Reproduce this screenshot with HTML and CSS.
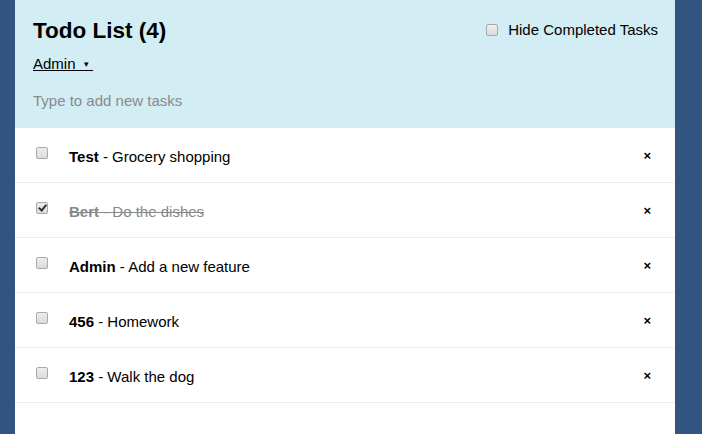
FILE: index.html
```html
<!DOCTYPE html>
<html>
<head>
<meta charset="utf-8">
<link rel="stylesheet" href="styles.css">
</head>
<body>
<div class="container">
  <header class="header">
    <div class="header-top">
      <h1 class="title">Todo List (4)</h1>
      <label class="hide-completed">
        <input type="checkbox" class="check">
        <span>Hide Completed Tasks</span>
      </label>
    </div>
    <div class="login"><a class="login-link">Admin&nbsp; <span class="caret">▾</span>&nbsp;</a></div>
    <form class="new-task">
      <input type="text" class="new-input" placeholder="Type to add new tasks">
    </form>
  </header>
  <ul class="tasks">
    <li class="task">
      <input type="checkbox" class="check">
      <span class="text"><strong>Test</strong> - Grocery shopping</span>
      <button class="delete">×</button>
    </li>
    <li class="task checked">
      <input type="checkbox" class="check" checked>
      <span class="text"><strong>Bert</strong> - Do the dishes</span>
      <button class="delete">×</button>
    </li>
    <li class="task">
      <input type="checkbox" class="check">
      <span class="text"><strong>Admin</strong> - Add a new feature</span>
      <button class="delete">×</button>
    </li>
    <li class="task">
      <input type="checkbox" class="check">
      <span class="text"><strong>456</strong> - Homework</span>
      <button class="delete">×</button>
    </li>
    <li class="task">
      <input type="checkbox" class="check">
      <span class="text"><strong>123</strong> - Walk the dog</span>
      <button class="delete">×</button>
    </li>
  </ul>
</div>
</body>
</html>
```
FILE: styles.css
```css
html, body {
  margin: 0;
  padding: 0;
  height: 100%;
}
body {
  background: #315481;
  font-family: "Liberation Sans", Arial, sans-serif;
  font-size: 15px;
  color: #000;
}
.container {
  width: 660px;
  margin-left: 15px;
  min-height: 100%;
  background: #fff;
}
.header {
  background: #d2edf4;
  padding: 18px 17px 19px 18px;
}
.header-top {
  display: flex;
  justify-content: space-between;
  align-items: flex-start;
}
.title {
  margin: 0;
  font-size: 22.5px;
  font-weight: bold;
  line-height: normal;
}
.hide-completed {
  display: flex;
  align-items: center;
  gap: 10px;
  margin-top: 3px;
  line-height: 17px;
}
.login {
  margin-top: 11px;
  line-height: 17px;
}
.login-link {
  color: #000;
  text-decoration: underline;
}
.caret {
  font-size: 9px;
  vertical-align: 2px;
}
.new-task {
  margin: 19px 0 0 0;
}
.new-input {
  display: block;
  box-sizing: border-box;
  width: 100%;
  border: none;
  background: transparent;
  padding: 0;
  height: 17px;
  font-family: "Liberation Sans", Arial, sans-serif;
  font-size: 15px;
  outline: none;
}
.new-input::placeholder {
  color: #8a8a8a;
}
.tasks {
  margin: 0;
  padding: 0;
  list-style: none;
}
.task {
  display: flex;
  align-items: center;
  height: 54px;
  padding: 0 24px 0 21px;
  border-bottom: 1px solid #eeeeee;
}
.check {
  -webkit-appearance: none;
  appearance: none;
  width: 12px;
  height: 12px;
  margin: 0;
  box-sizing: border-box;
  border: 1px solid #a9a9a9;
  border-radius: 2px;
  background: linear-gradient(#ededed, #dcdcdc);
  position: relative;
  flex: none;
}
.task .check {
  margin-top: -4px;
}
.check:checked::after {
  content: "";
  position: absolute;
  left: 3px;
  top: 0px;
  width: 3px;
  height: 6px;
  border: solid #333;
  border-width: 0 2px 2px 0;
  transform: rotate(40deg);
}
.text {
  margin-left: 21px;
  margin-top: 2px;
  flex: 1;
  line-height: 17px;
}
.checked .text {
  color: #888;
  text-decoration: line-through;
}
.delete {
  border: none;
  background: none;
  padding: 0;
  font-family: "Liberation Sans", Arial, sans-serif;
  font-size: 13px;
  font-weight: bold;
  color: #000;
  line-height: 15px;
}
```
